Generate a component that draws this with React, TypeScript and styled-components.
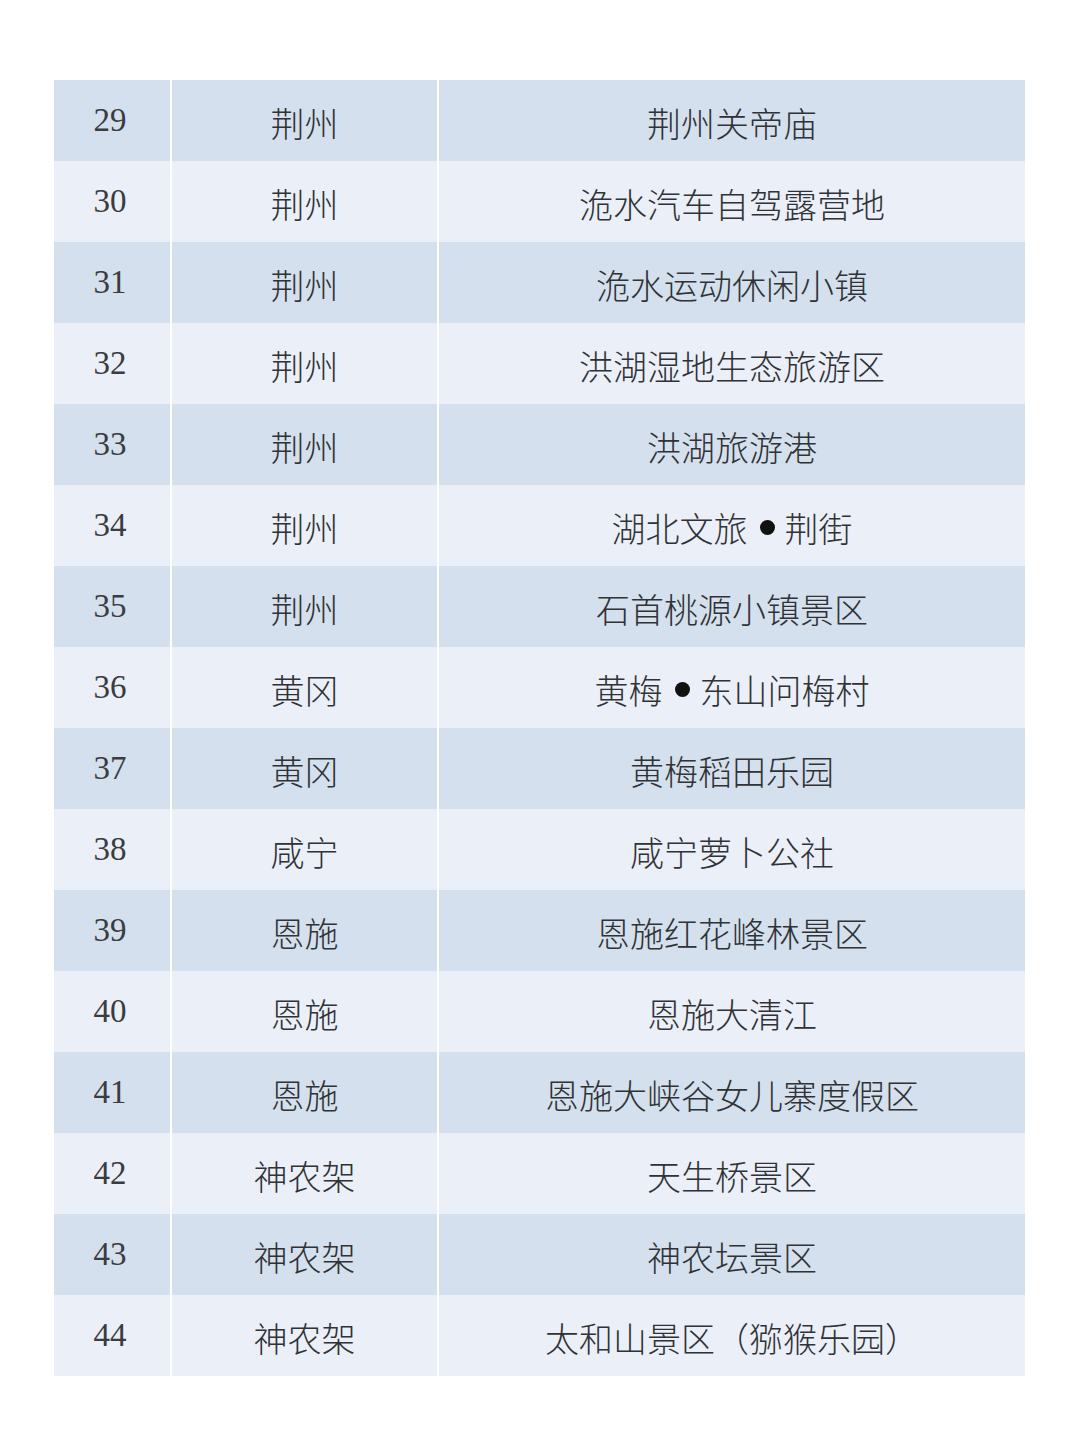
import * as React from 'react'
import styled, { createGlobalStyle } from 'styled-components'

const GlobalStyle = createGlobalStyle`
    html, body {
        margin: 0;
        padding: 0;
        background: #ffffff;
    }
`

const StyledPage = styled.div`
    padding: 80px 0 62px 54px;
`

const StyledTable = styled.div`
    width: 971px;
    display: flex;
    flex-direction: column;
`

const StyledRow = styled.div<{ $dark: boolean }>`
    display: grid;
    grid-template-columns: 116px 265px 1fr;
    column-gap: 2px;
    height: 81px;
    background: #ffffff;
    color: #303235;

    & > span {
        background: ${(p) => (p.$dark ? '#d4e0ed' : '#ebeff8')};
    }
`

const StyledNum = styled.span`
    display: flex;
    align-items: center;
    justify-content: center;
    font-family: 'Liberation Serif', 'Times New Roman', serif;
    font-size: 33px;
    color: #3a3c40;
    padding-right: 4px;
`

const StyledCell = styled.span`
    display: flex;
    align-items: center;
    justify-content: center;
    font-family: 'Noto Sans CJK SC', 'Noto Sans', sans-serif;
    font-size: 34px;
    font-weight: 300;
    padding-top: 3px;
`

const StyledDot = styled.span`
    display: inline-block;
    width: 15px;
    height: 15px;
    border-radius: 50%;
    background: #111;
    margin: 0 10px 0 12px;
`

interface Spot {
    id: number
    city: string
    name: string
}

const SPOTS: Spot[] = [
    { id: 29, city: '荆州', name: '荆州关帝庙' },
    { id: 30, city: '荆州', name: '洈水汽车自驾露营地' },
    { id: 31, city: '荆州', name: '洈水运动休闲小镇' },
    { id: 32, city: '荆州', name: '洪湖湿地生态旅游区' },
    { id: 33, city: '荆州', name: '洪湖旅游港' },
    { id: 34, city: '荆州', name: '湖北文旅•荆街' },
    { id: 35, city: '荆州', name: '石首桃源小镇景区' },
    { id: 36, city: '黄冈', name: '黄梅•东山问梅村' },
    { id: 37, city: '黄冈', name: '黄梅稻田乐园' },
    { id: 38, city: '咸宁', name: '咸宁萝卜公社' },
    { id: 39, city: '恩施', name: '恩施红花峰林景区' },
    { id: 40, city: '恩施', name: '恩施大清江' },
    { id: 41, city: '恩施', name: '恩施大峡谷女儿寨度假区' },
    { id: 42, city: '神农架', name: '天生桥景区' },
    { id: 43, city: '神农架', name: '神农坛景区' },
    { id: 44, city: '神农架', name: '太和山景区（猕猴乐园）' },
]

const renderName = (name: string) => {
    const parts = name.split('•')
    if (parts.length === 1) return name
    return (
        <>
            {parts[0]}
            <StyledDot />
            {parts[1]}
        </>
    )
}

const App = () => {
    return (
        <>
            <GlobalStyle />
            <StyledPage>
                <StyledTable>
                    {SPOTS.map((spot, i) => (
                        <StyledRow key={spot.id} $dark={i % 2 === 0}>
                            <StyledNum>{spot.id}</StyledNum>
                            <StyledCell>{spot.city}</StyledCell>
                            <StyledCell>{renderName(spot.name)}</StyledCell>
                        </StyledRow>
                    ))}
                </StyledTable>
            </StyledPage>
        </>
    )
}

export default App
